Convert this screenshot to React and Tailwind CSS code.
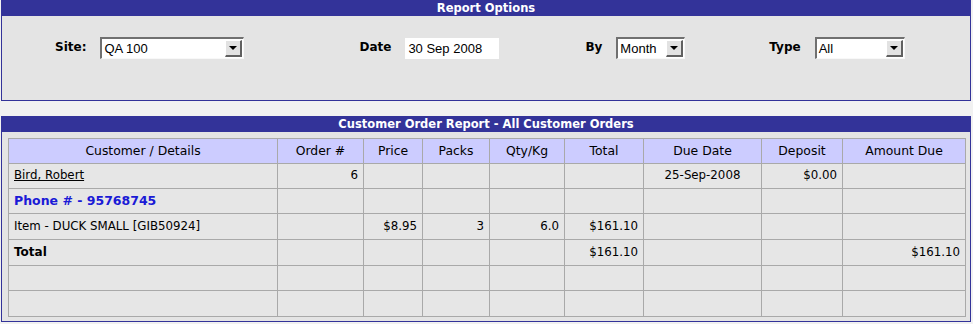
const Select = ({ value, width }) => (
  <div
    className={`flex items-center h-[22px] bg-white border-t-2 border-l-2 border-t-[#707070] border-l-[#707070] border-b border-r border-b-[#f8f8f8] border-r-[#f8f8f8] ${width}`}
  >
    <span className="flex-1 pl-[2px] text-[13px] leading-none text-black font-['Liberation_Sans',sans-serif]">{value}</span>
    <span className="flex items-center justify-center w-[17px] h-[17px] mr-[1px] bg-[#e2e2e2] border-r-2 border-b-2 border-r-[#606060] border-b-[#606060] border-t border-l border-t-white border-l-white">
      <span className="w-0 h-0 border-l-[4px] border-r-[4px] border-t-[4px] border-l-transparent border-r-transparent border-t-black" />
    </span>
  </div>
);

const Label = ({ children }) => (
  <span className="font-bold text-[12px] text-black self-start pt-[1px]">{children}</span>
);

const cols = [269, 86, 59, 67, 75, 79, 118, 81, 123];
const heads = ["Customer / Details", "Order #", "Price", "Packs", "Qty/Kg", "Total", "Due Date", "Deposit", "Amount Due"];

const rows = [
  { h: "h-[25px]", cells: [<span className="underline">Bird, Robert</span>, "6", "", "", "", "", "25-Sep-2008", "$0.00", ""] },
  { h: "h-[25px]", cells: [<span className="font-bold text-[12.5px] text-[#1a1ad6]">Phone # - 95768745</span>, "", "", "", "", "", "", "", ""] },
  { h: "h-[26px]", cells: ["Item - DUCK SMALL [GIB50924]", "", "$8.95", "3", "6.0", "$161.10", "", "", ""] },
  { h: "h-[26px]", cells: [<span className="font-bold text-[12px]">Total</span>, "", "", "", "", "$161.10", "", "", "$161.10"] },
  { h: "h-[25px]", cells: ["", "", "", "", "", "", "", "", ""] },
  { h: "h-[26px]", cells: ["", "", "", "", "", "", "", "", ""] },
];

const align = (i) => (i === 0 ? "text-left pl-[5px]" : i === 6 ? "text-center" : "text-right pr-[5px]");

export default function App() {
  return (
    <div className="w-[973px] h-[324px] bg-[#f1f1f1] px-[1px] font-['DejaVu_Sans','Liberation_Sans',sans-serif] text-black overflow-hidden">
      <div className="border-x border-b border-[#333399] bg-[#e4e4e4] mr-[1px]">
        <div className="h-[16px] bg-[#333399] text-white font-bold text-[11.5px] leading-[16px] text-center">
          Report Options
        </div>
        <div className="h-[84px] flex items-start pt-[21px] pl-[53px]">
          <div className="flex items-start gap-[14px]">
            <Label>Site:</Label>
            <Select value="QA 100" width="w-[144px]" />
          </div>
          <div className="flex items-start gap-[14px] ml-[115px]">
            <Label>Date</Label>
            <div className="h-[21px] w-[94px] bg-white flex items-center pl-[3px] text-[13px] leading-none mt-[1px] font-['Liberation_Sans',sans-serif]">30 Sep 2008</div>
          </div>
          <div className="flex items-start gap-[14px] ml-[86px]">
            <Label>By</Label>
            <Select value="Month" width="w-[69px]" />
          </div>
          <div className="flex items-start gap-[14px] ml-[84px]">
            <Label>Type</Label>
            <Select value="All" width="w-[90px]" />
          </div>
        </div>
      </div>

      <div className="mt-[15px] border-x border-b border-[#333399] bg-[#e4e4e4] mr-[1px] pb-[4px]">
        <div className="h-[16px] bg-[#333399] text-white font-bold text-[11.5px] leading-[16px] text-center">
          Customer Order Report - All Customer Orders
        </div>
        <table className="ml-[6px] mt-[6px] border-collapse table-fixed w-[957px] text-[11.8px]">
          <colgroup>
            {cols.map((w, i) => (
              <col key={i} style={{ width: w }} />
            ))}
          </colgroup>
          <thead>
            <tr className="h-[25px] bg-[#ccccff]">
              {heads.map((h) => (
                <th key={h} className="border border-[#a9a9a9] font-normal text-[12.4px] text-center">
                  {h}
                </th>
              ))}
            </tr>
          </thead>
          <tbody>
            {rows.map((r, ri) => (
              <tr key={ri} className={`${r.h} bg-[#e6e6e6]`}>
                {r.cells.map((c, i) => (
                  <td key={i} className={`border border-[#a9a9a9] whitespace-nowrap ${align(i)}`}>
                    {c}
                  </td>
                ))}
              </tr>
            ))}
          </tbody>
        </table>
      </div>
    </div>
  );
}
